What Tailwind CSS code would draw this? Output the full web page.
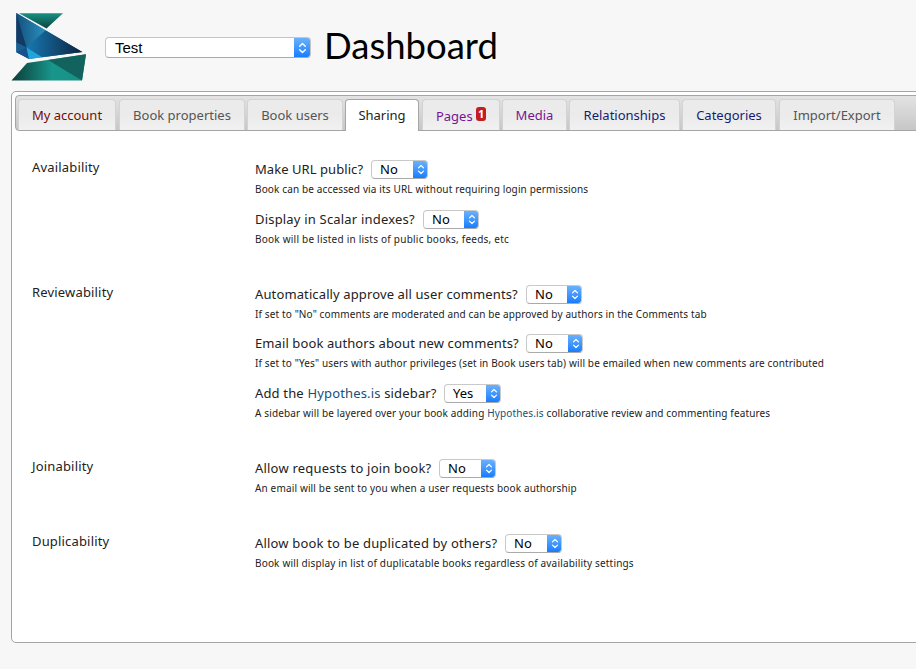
<!DOCTYPE html>
<html lang="en"><head><meta charset="utf-8"><title>Dashboard</title>
<script src="https://cdn.jsdelivr.net/npm/@tailwindcss/browser@4"></script></head>
<body class="h-[669px] w-[916px] overflow-hidden bg-[#f7f7f7] font-['Noto_Sans',sans-serif] text-[13px] text-[#222] whitespace-nowrap">
<svg class="absolute h-0 w-0"><defs>
<linearGradient id="g2"><stop stop-color="#175786"/><stop offset=".4" stop-color="#2689b7"/><stop offset="1" stop-color="#0d233d"/></linearGradient>
<linearGradient id="g3"><stop stop-color="#0c3c38"/><stop offset=".55" stop-color="#18968b"/><stop offset="1" stop-color="#178f84"/></linearGradient>
<linearGradient id="g4"><stop stop-color="#1679b2"/><stop offset="1" stop-color="#0d2440"/></linearGradient>
<linearGradient id="g5" x2="0" y2="1"><stop stop-color="#189084"/><stop offset="1" stop-color="#0d4440"/></linearGradient>
<linearGradient id="g6"><stop stop-color="#15507f"/><stop offset="1" stop-color="#2a91bd"/></linearGradient>
</defs>
<symbol id="arrows" viewBox="0 0 9 12"><path d="M1.7 4.2 4.5 1.5 7.3 4.2M1.7 7.8 4.5 10.5 7.3 7.8" fill="none" stroke="#fff" stroke-width="1.4" stroke-linecap="round" stroke-linejoin="round"/></symbol></svg>
<header class="flex h-[91px] items-start">
<svg class="mt-[12px] ml-[10px] h-[70px] w-[78px] shrink-0" viewBox="10 12 78 70">
<path d="M19 13.300H63L46.500 28.500Z" fill="url(#g5)"/>
<path d="M16.300 13 82.300 52 29 59 16.300 52.300Z" fill="url(#g2)"/>
<path d="M16.300 13 45.500 30.300 26.500 47.500Z" fill="url(#g6)"/>
<path d="M16.300 13 26.500 47.500 16.300 42.500Z" fill="#123a63"/><path d="M16.300 42.500 26.500 47.500 16.300 52.300Z" fill="#1b6094"/><path d="M26.500 47.500 29 59 16.300 52.300Z" fill="#17518b"/>
<path d="M26.500 47.500 45.500 30.300 82.300 52 42 57.300Z" fill="url(#g4)"/>
<path d="M26.500 47.500 42 57.300 29 59Z" fill="#20a5d8"/>
<path d="M27 63 86 54.300 82 80.500H11.500Z" fill="url(#g3)"/><path d="M48 60 86 54.300 82 80.500Z" fill="#12635d"/>
</svg>
<div class="mt-[37px] ml-[17px] flex h-[21px] w-[206px] shrink-0 overflow-hidden rounded-[4px] border border-[#c5c5c5] border-b-[#aaa] bg-white font-['Liberation_Sans',sans-serif] text-[15px] leading-[20px] text-black"><span class="flex-1 pl-[9px]">Test</span><span class="-my-px -mr-px flex w-[17px] items-center justify-center bg-linear-to-b from-[#6cb3fa] to-[#087aff]"><svg class="h-[12px] w-[9px]"><use href="#arrows"/></svg></span></div>
<h1 class="mt-[23px] ml-[13px] font-['Lato',sans-serif] text-[36.5px] leading-[44px] text-black">Dashboard</h1>
</header>
<main class="ml-[11px] h-[552px] w-[920px] rounded-[5px] border border-[#a5a5a5] bg-white p-[3px]">
<nav class="flex h-[36px] items-end gap-[3px] rounded-l-[4px] border border-[#a5a5a5] bg-linear-to-b from-[#e3e3e3] to-[#c7c7c7] pl-[2px] leading-[31px] *:h-[31px] *:shrink-0 *:rounded-t-[4px] *:border *:border-b-0 *:border-[#d3d3d3] *:bg-linear-to-b *:from-[#ebebeb] *:from-50% *:to-[#f1f1f1] *:text-center [&>*]:text-[#555]">
<a class="w-[98px] text-[#730d0d]!">My account</a><a class="w-[126px]">Book properties</a><a class="-ml-px w-[96px]">Book users</a><a class="relative -mb-px -ml-px h-[32px]! w-[74px] border-[#a5a5a5]! bg-none! bg-white text-[#222]!">Sharing</a><a class="w-[78px] pt-px leading-[30px] text-[#771493]!">Pages <span class="relative -top-[3px] inline-block h-[14px] w-[10px] rounded-[3px] bg-[#c31d21] text-center text-[11px] leading-[13px] font-bold text-white">1</span></a><a class="-ml-px w-[65px] text-[#771493]!">Media</a><a class="-ml-px w-[111px] text-[#171b73]!">Relationships</a><a class="-ml-px w-[94px] text-[#171b73]!">Categories</a><a class="w-[116px]">Import/Export</a></nav>
<div id="rows" class="grid grid-cols-[223px_1fr] pt-[27px] pl-[17px]"></div>
</main>
<script>
const link='<a class="text-[#174f79]">Hypothes.is</a>';
// Each item: question, question classes, value, description, select width, description tracking
const sections=[["Availability","h-[125px]",[["Make URL public?","w-[116px] tracking-[0.06px]","No","Book can be accessed via its URL without requiring login permissions","w-[57px]","tracking-[0.14px]"],["Display in Scalar indexes?","w-[168px] tracking-[0.19px]","No","Book will be listed in lists of public books, feeds, etc","w-[56px]","tracking-[0.23px]"]]],
["Reviewability","h-[174px]",[["Automatically approve all user comments?","w-[271px] tracking-[0.12px]","No",'If set to "No" comments are moderated and can be approved by authors in the Comments tab',"w-[56px]","tracking-[0.13px]"],["Email book authors about new comments?","w-[271px] tracking-[0.1px]","No",'If set to "Yes" users with author privileges (set in Book users tab) will be emailed when new comments are contributed',"w-[57px]","tracking-[0.135px]"],[`Add the ${link} sidebar?`,"w-[189px] tracking-[0.16px]","Yes",`A sidebar will be layered over your book adding ${link} collaborative review and commenting features`,"w-[57px]","tracking-[0.14px]"]]],
["Joinability","h-[75px]",[["Allow requests to join book?","w-[184px] tracking-[0.2px]","No","An email will be sent to you when a user requests book authorship","w-[57px]","tracking-[0.15px]"]]],
["Duplicability","h-[75px]",[["Allow book to be duplicated by others?","w-[250px] tracking-[0.18px]","No","Book will display in list of duplicatable books regardless of availability settings","w-[57px]","tracking-[0.17px]"]]]];
document.getElementById("rows").innerHTML=sections.map(([n,h,items])=>`<div class="leading-[18px] tracking-[0.17px]">${n}</div><div class="${h}">`+items.map(([q,w,v,d,sw,t],i)=>`<div class="${i===0&&n==="Reviewability"?'h-[49px]':'h-[50px]'}"><div class="flex h-[20px] items-center pt-[3px]"><span class="${w}">${q}</span><span class="${sw} flex h-[19px] overflow-hidden rounded-[4px] border border-[#c9c9c9] border-b-[#aaa] bg-white leading-[17px] text-black"><span class="flex-1 pl-[8px]">${v}</span><span class="-my-px -mr-px flex w-[15px] items-center justify-center bg-linear-to-b from-[#6cb3fa] to-[#087aff]"><svg class="h-[11px] w-[8px]"><use href="#arrows"/></svg></span></span></div><p class="pt-[4px] text-[10px] leading-[14px] ${t}">${d}</p></div>`).join("")+"</div>").join("");
</script></body></html>
